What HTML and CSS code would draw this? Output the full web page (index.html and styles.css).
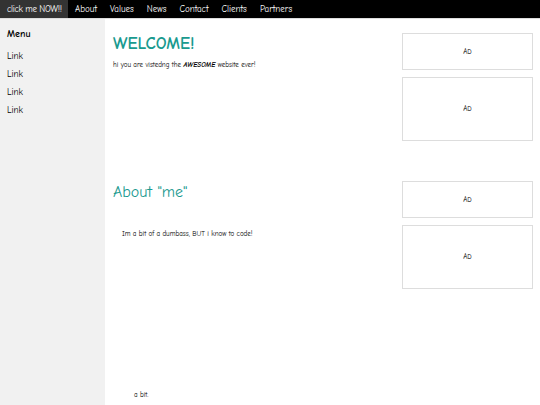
FILE: index.html
```html
<!DOCTYPE html>
<html>
<head>
<meta charset="utf-8">
<link rel="stylesheet" href="styles.css">
</head>
<body>
<nav class="topnav">
  <a class="nav-link active">click me NOW!!</a>
  <a class="nav-link">About</a>
  <a class="nav-link">Values</a>
  <a class="nav-link">News</a>
  <a class="nav-link">Contact</a>
  <a class="nav-link">Clients</a>
  <a class="nav-link">Partners</a>
</nav>
<div class="layout">
  <aside class="sidebar">
    <h3 class="menu-title">Menu</h3>
    <a class="side-link">Link</a>
    <a class="side-link">Link</a>
    <a class="side-link">Link</a>
    <a class="side-link">Link</a>
  </aside>
  <main class="main">
    <section class="row row-first">
      <div class="content">
        <h1 class="welcome">WELCOME!</h1>
        <p class="text">hi you are vistedng the <b><i>AWESOME</i></b> website ever!</p>
      </div>
      <div class="ads">
        <div class="ad ad-short">AD</div>
        <div class="ad ad-tall">AD</div>
      </div>
    </section>
    <section class="row">
      <div class="content">
        <h2 class="about">About "me"</h2>
        <p class="text indent">Im a bit of a dumbass, BUT i know to code!</p>
        <p class="text indent2">a bit.</p>
      </div>
      <div class="ads">
        <div class="ad ad-short">AD</div>
        <div class="ad ad-tall">AD</div>
      </div>
    </section>
  </main>
</div>
</body>
</html>
```
FILE: styles.css
```css
html, body {
  margin: 0;
  padding: 0;
  height: 100%;
}
body {
  font-family: "Comic Sans MS", "Comic Neue", cursive, sans-serif;
  background: #fff;
  color: #000;
  overflow: hidden;
}
.topnav {
  display: flex;
  background: #000;
  height: 18px;
  border-bottom: 1px solid #ddd;
}
.nav-link {
  color: #fff;
  font-size: 9px;
  line-height: 18px;
  padding: 0 6.5px;
}
.nav-link.active {
  background: #333;
  padding: 0 6px 0 7px;
  margin-right: 1px;
  letter-spacing: -0.3px;
}
.layout {
  display: flex;
  height: calc(100% - 19px);
}
.sidebar {
  width: 105px;
  background: #f1f1f1;
  display: flex;
  flex-direction: column;
  padding: 8px 7px 0;
  box-sizing: border-box;
}
.menu-title {
  font-size: 10px;
  font-weight: bold;
  margin: 0 0 6px;
  line-height: 14px;
}
.side-link {
  font-size: 9px;
  line-height: 18px;
}
.main {
  flex: 1;
  padding: 14px 7px 0 8px;
}
.row {
  display: flex;
}
.row-first {
  margin-bottom: 40px;
}
.content {
  flex: 1;
}
.ads {
  width: 131px;
  display: flex;
  flex-direction: column;
  gap: 7px;
}
.ad {
  border: 1px solid #ddd;
  display: flex;
  align-items: center;
  justify-content: center;
  font-size: 7px;
  box-sizing: border-box;
}
.ad-short {
  height: 37px;
}
.ad-tall {
  height: 64px;
}
.welcome {
  color: #1a9a8f;
  font-size: 17px;
  margin: 0;
  line-height: 22px;
}
.about {
  color: #1a9a8f;
  font-size: 16px;
  font-weight: normal;
  margin: 0;
  line-height: 22px;
}
.text {
  font-size: 7px;
  margin: 6px 0 0;
}
.indent {
  margin-top: 27px;
  padding-left: 9px;
}
.indent2 {
  margin-top: 153px;
  padding-left: 21px;
}
```
